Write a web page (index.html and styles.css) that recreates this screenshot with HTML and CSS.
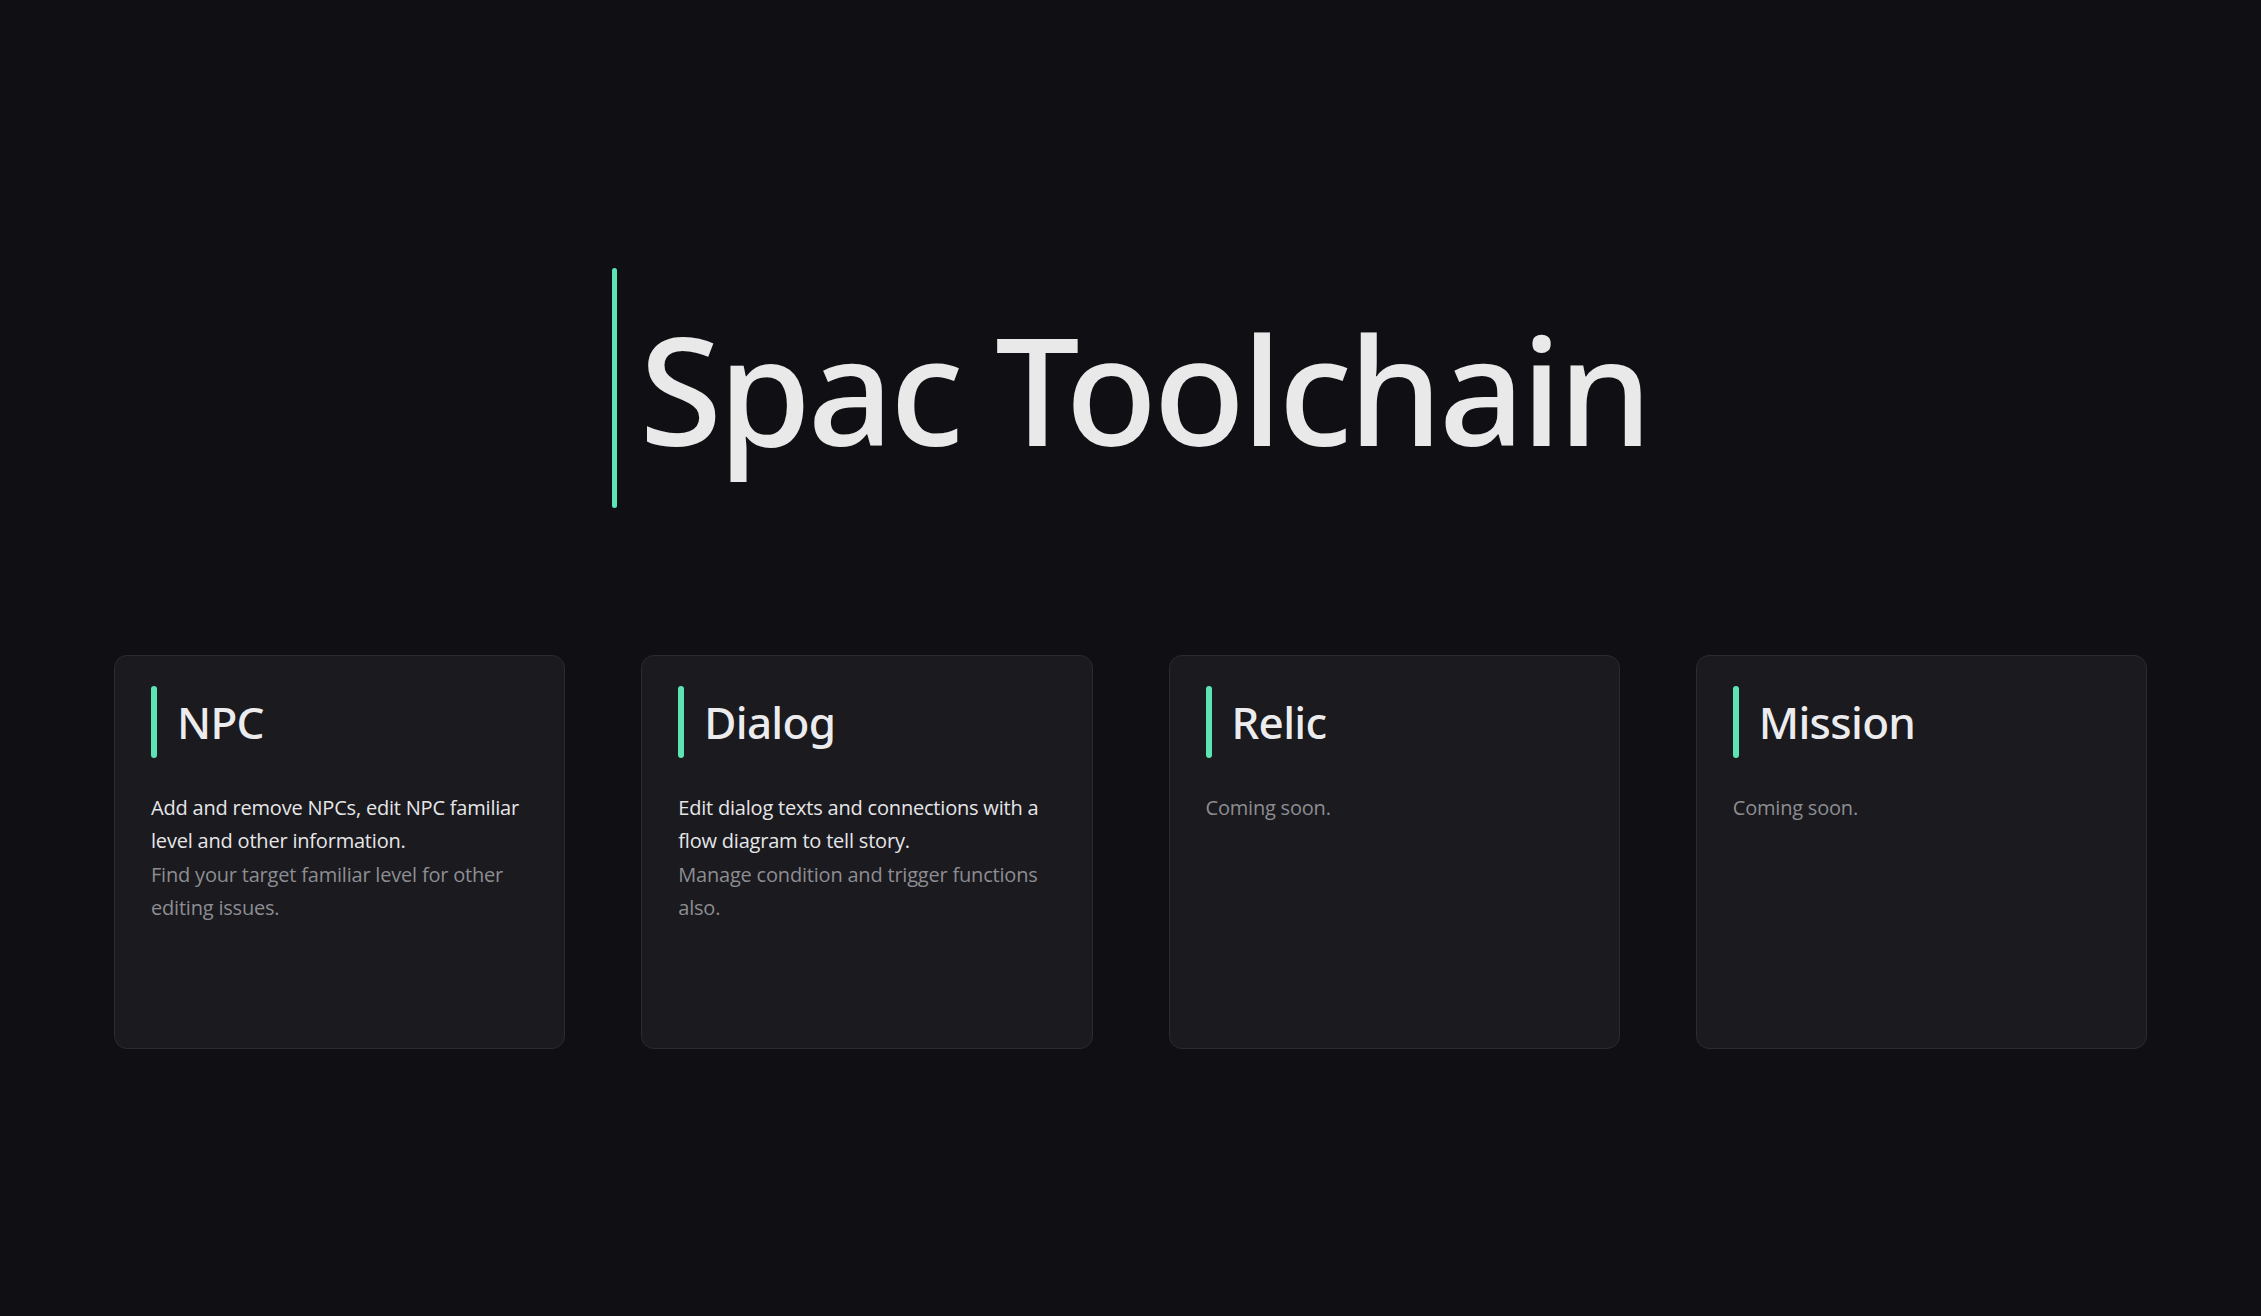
FILE: index.html
```html
<!DOCTYPE html>
<html lang="en">
<head>
<meta charset="utf-8">
<title>Spac Toolchain</title>
<link rel="stylesheet" href="styles.css">
</head>
<body>
<main class="page">
  <header class="hero">
    <h1 class="hero-title">Spac Toolchain</h1>
  </header>
  <section class="cards">
    <article class="card">
      <h2 class="card-title">NPC</h2>
      <p class="card-text">
        <span class="primary">Add and remove NPCs, edit NPC familiar level and other information.</span>
        <span class="secondary">Find your target familiar level for other editing issues.</span>
      </p>
    </article>
    <article class="card">
      <h2 class="card-title">Dialog</h2>
      <p class="card-text">
        <span class="primary">Edit dialog texts and connections with a flow diagram to tell story.</span>
        <span class="secondary">Manage condition and trigger functions also.</span>
      </p>
    </article>
    <article class="card">
      <h2 class="card-title">Relic</h2>
      <p class="card-text">
        <span class="secondary">Coming soon.</span>
      </p>
    </article>
    <article class="card">
      <h2 class="card-title">Mission</h2>
      <p class="card-text">
        <span class="secondary">Coming soon.</span>
      </p>
    </article>
  </section>
</main>
</body>
</html>
```

FILE: styles.css
```css
* { box-sizing: border-box; }

html, body {
  margin: 0;
  padding: 0;
  height: 100%;
}

body {
  background: #101014;
  color: #e8e8ea;
  font-family: "Open Sans", "Noto Sans", "Liberation Sans", sans-serif;
}

.page {
  min-height: 100vh;
  display: flex;
  flex-direction: column;
  align-items: center;
  justify-content: center;
  padding: 0 114px;
  gap: 147px;
}

.hero {
  display: flex;
  justify-content: center;
}

.hero-title {
  margin: 0;
  display: flex;
  align-items: center;
  gap: 22px;
  height: 240px;
  font-family: "Noto Sans", "Open Sans", sans-serif;
  font-size: 150px;
  font-weight: 500;
  line-height: 1;
  color: #e9e9ea;
  letter-spacing: -3.6px;
}

.hero-title::before {
  content: "";
  align-self: stretch;
  width: 5px;
  border-radius: 3px;
  background: #5de4b4;
}

.cards {
  width: 100%;
  display: grid;
  grid-template-columns: repeat(4, 1fr);
  gap: 76px;
}

.card {
  height: 394px;
  background: #1a1a1f;
  border: 1px solid #2b2b30;
  border-radius: 13px;
  padding: 30px 36px;
}

.card-title {
  margin: 0;
  display: flex;
  align-items: center;
  gap: 20px;
  height: 72px;
  font-family: "Noto Sans", "Open Sans", sans-serif;
  font-size: 44px;
  font-weight: 500;
  line-height: 1;
  letter-spacing: -0.7px;
  color: #ececee;
}

.card-title::before {
  content: "";
  align-self: stretch;
  width: 6px;
  border-radius: 3px;
  background: #5de4b4;
}

.card-text {
  margin: 33px 0 0;
  font-size: 20px;
  line-height: 33.5px;
  letter-spacing: -0.2px;
}

.primary, .secondary { display: block; }

.primary { color: #e6e6e8; }

.secondary { color: #8d8d92; }
```
